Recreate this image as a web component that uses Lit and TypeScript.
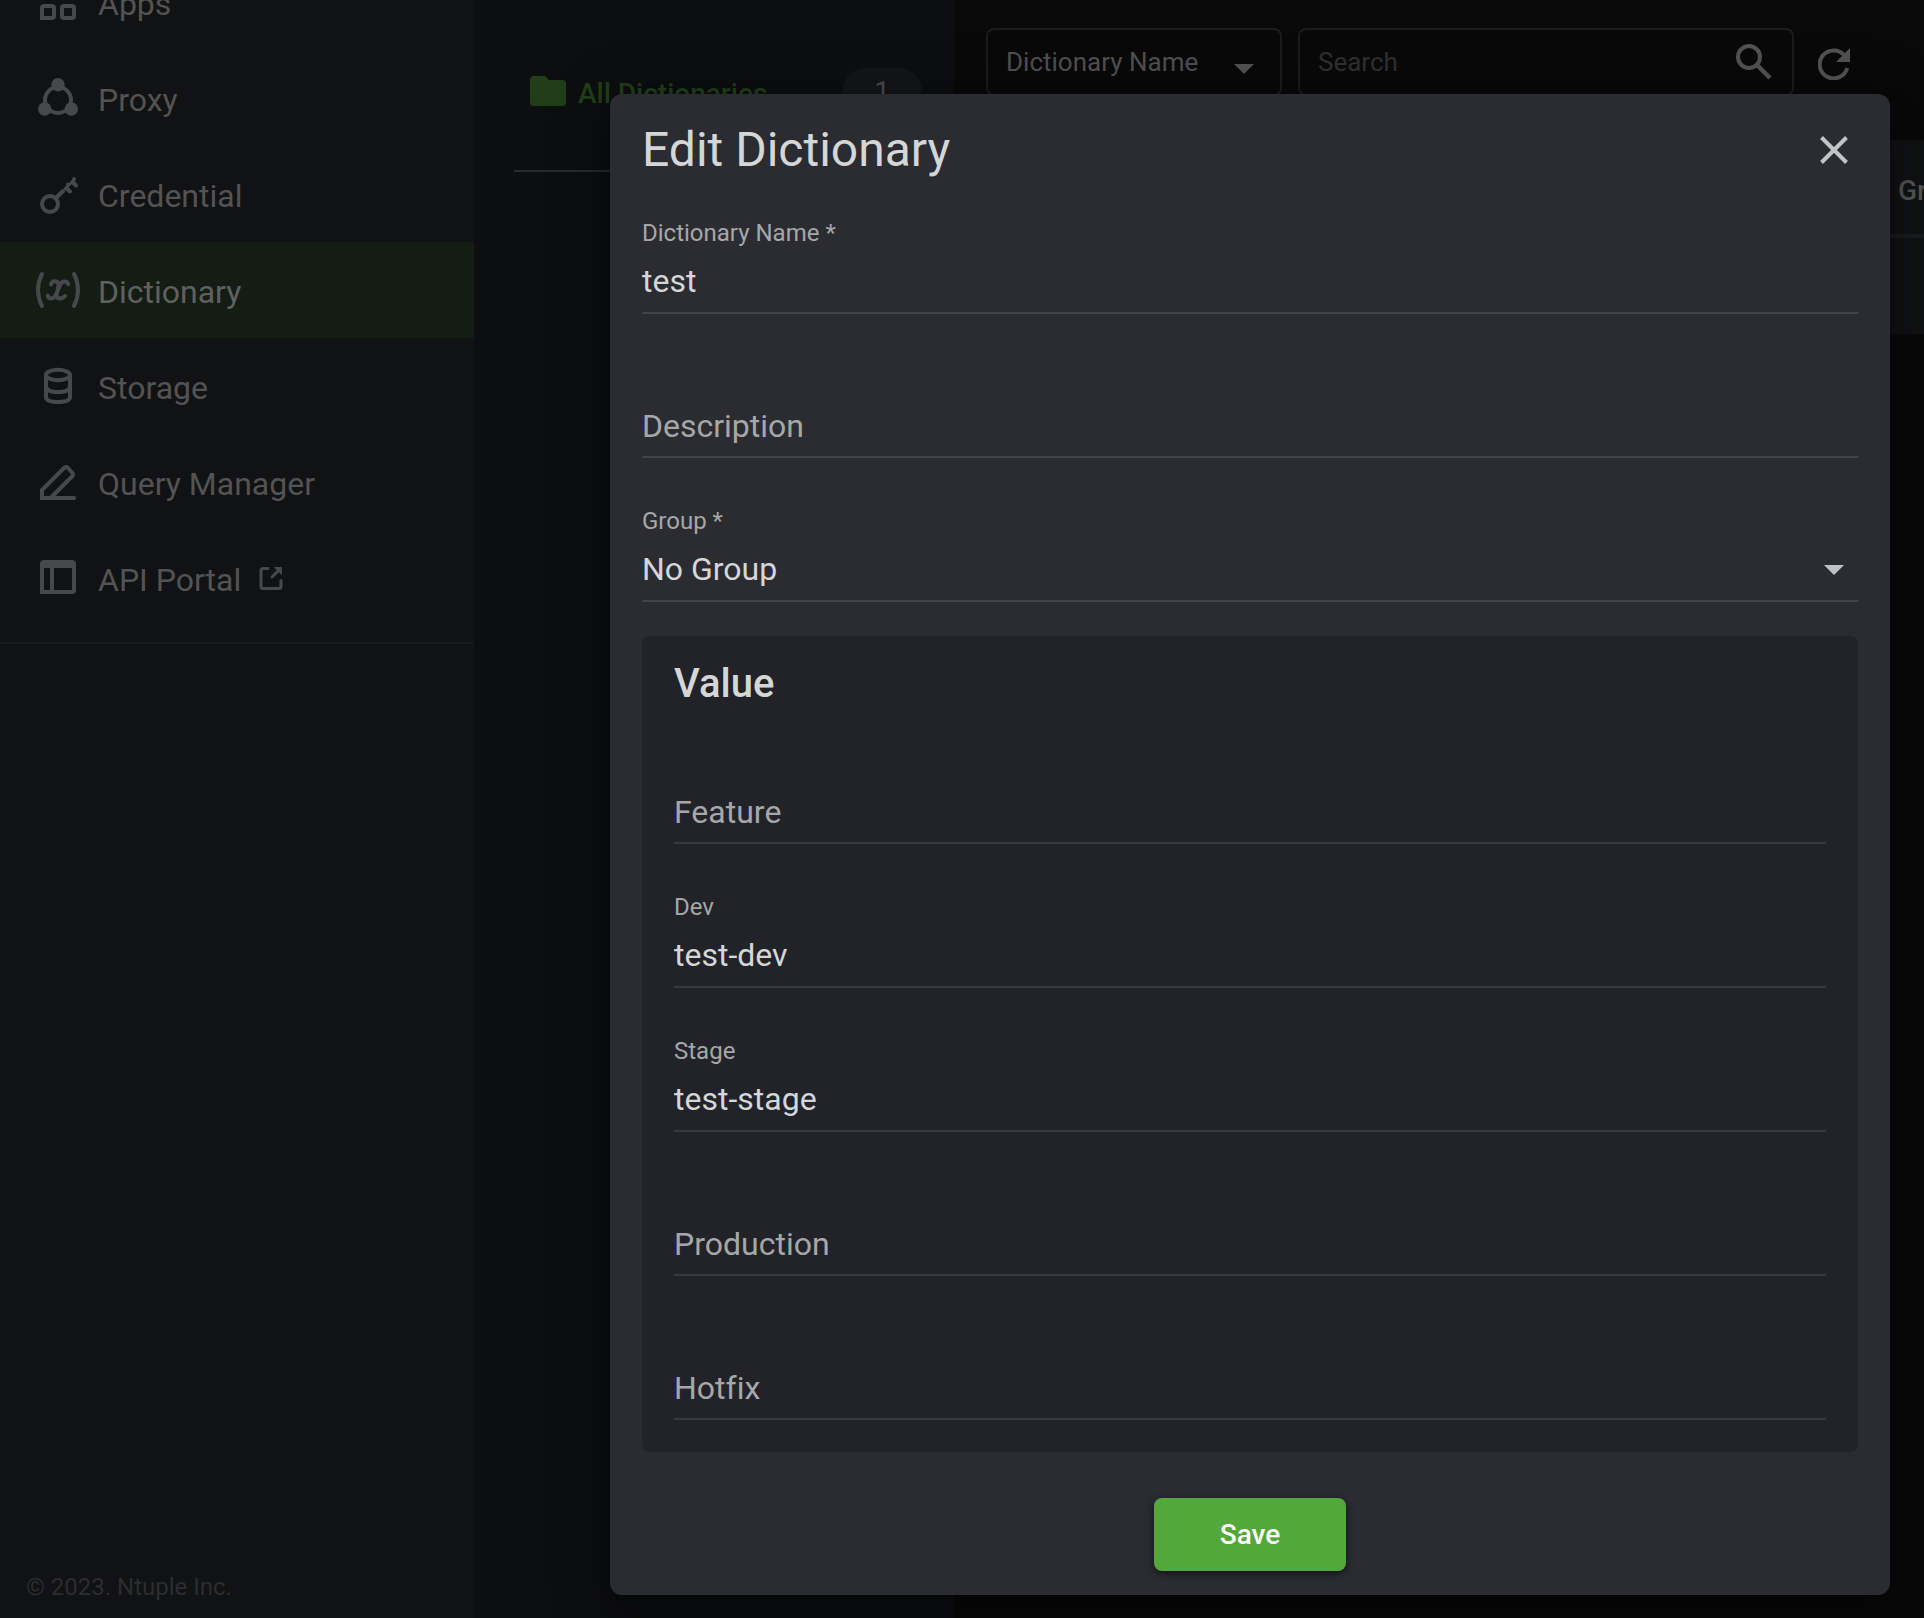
import { LitElement, html, css, svg, nothing, type SVGTemplateResult } from "lit";
import { customElement, property } from "lit/decorators.js";
import { classMap } from "lit/directives/class-map.js";

const icons: Record<string, SVGTemplateResult> = {
  apps: svg`<g fill="none" stroke="currentColor" stroke-width="4">
    <rect x="4" y="4" width="12" height="12" rx="2"/><rect x="24" y="4" width="12" height="12" rx="2"/>
    <path d="M4 36V26Q4 24 6 24H14Q16 24 16 26V34Q16 36 14 36Z"/><rect x="24" y="24" width="12" height="12" rx="2"/></g>`,
  proxy: svg`<circle cx="20" cy="22" r="13" fill="none" stroke="currentColor" stroke-width="4"/>
    <g fill="currentColor"><circle cx="20" cy="6.7" r="6.7"/><circle cx="6.7" cy="31" r="6.7"/><circle cx="33.3" cy="31" r="6.7"/></g>`,
  credential: svg`<g fill="none" stroke="currentColor" stroke-linecap="round">
    <circle cx="12" cy="30" r="8" stroke-width="4"/>
    <path d="M18.5 23.5L26 16" stroke-width="4" stroke-linecap="butt"/>
    <path d="M27 15L36 6" stroke-width="2.6"/>
    <path d="M28.5 14L32 17.5M34.5 8L38 11.5M36 5V5.1M30 10.5V10.6" stroke-width="4"/></g>`,
  dictionary: svg`<g fill="none" stroke="currentColor" stroke-width="4" stroke-linecap="round">
    <path d="M4 4Q-4 20 4 36M36 4Q44 20 36 36"/>
    <path d="M13 14.5C14 10 20.5 10 20.5 15C20.5 19 18.5 22 18.5 25.5C19 29.5 24.5 29 27 26M30.3 14.3C29 10 24 11 22.5 14C20.5 18 19 24 16.5 27C14 29.5 10 28.5 9.8 25.5"/></g>`,
  storage: svg`<g fill="none" stroke="currentColor" stroke-width="4">
    <ellipse cx="20" cy="9" rx="12" ry="5.2"/><path d="M8 9V31Q8 36 20 36T32 31V9M8 20Q8 26 20 26T32 20"/></g>`,
  query: svg`<path d="M4 36V28L26 6Q28 4 30 6L34 10.5Q36 12.5 34 14.5L12.5 36M4 36H36" fill="none" stroke="currentColor" stroke-width="4" stroke-linecap="round"/><path d="M2 34H6V38H2Z" fill="currentColor"/>`,
  portal: svg`<path fill="currentColor" fill-rule="evenodd" d="M6 2H34a4 4 0 0 1 4 4V32a4 4 0 0 1-4 4H2V6a4 4 0 0 1 4-4ZM6 10V32H12V10ZM16 10V32H34V10Z"/>`,
};

interface NavEntry { icon: string; label: string; active?: boolean; external?: boolean }

const navEntries: NavEntry[] = [
  { icon: "apps", label: "Apps" },
  { icon: "proxy", label: "Proxy" },
  { icon: "credential", label: "Credential" },
  { icon: "dictionary", label: "Dictionary", active: true },
  { icon: "storage", label: "Storage" },
  { icon: "query", label: "Query Manager" },
  { icon: "portal", label: "API Portal", external: true },
];

const caret = html`<svg class="caret" viewBox="0 0 20 10" aria-hidden="true"><path d="M0 0H20L10 10Z" fill="currentColor"/></svg>`;

/* Underlined field whose label floats above a value and rests on the line when empty. */
@customElement("form-field")
export class FormField extends LitElement {
  @property() label = "";
  @property() value = "";
  @property({ type: Array }) options?: string[];

  static styles = css`
    :host { display: block; }
    .field {
      display: grid;
      grid-template-rows: 30px 64px;
      border-bottom: 2px solid var(--line);
      color: #d5d6d8;
    }
    .label { grid-area: 1 / 1; font-size: 24px; line-height: 30px; color: #a6a7a9; }
    .empty .label { grid-area: 2 / 1; z-index: 1; padding-top: 2px; font-size: 32px; line-height: 62px; pointer-events: none; }
    .empty .label { padding-top: 4px; line-height: 60px; }
    .control {
      grid-area: 2 / 1;
      box-sizing: border-box;
      width: 100%;
      min-width: 0;
      height: 64px;
      margin: 0;
      padding: 2px 0 0;
      border: 0;
      border-radius: 0;
      outline: 0;
      background: transparent;
      color: inherit;
      font: 400 32px Roboto, sans-serif;
      appearance: none;
    }
    .control option { background: #2b2c31; }
    .caret {
      grid-area: 2 / 1;
      place-self: center end;
      width: 20px;
      height: 10px;
      margin: 0 14px 16px 0;
      padding-top: 20px;
      color: #c1c2c4;
      pointer-events: none;
    }
  `;

  render() {
    return html`<div class=${classMap({ field: true, empty: !this.value })}>
      <label class="label" for="control">${this.label}</label>
      ${this.options
        ? html`<select class="control" id="control">${this.options.map((o) => html`<option ?selected=${o === this.value}>${o}</option>`)}</select>${caret}`
        : html`<input class="control" id="control" type="text" .value=${this.value} />`}
    </div>`;
  }
}

@customElement("app-root")
export class AppRoot extends LitElement {
  static styles = css`
    :host { display: block; font-family: Roboto, sans-serif; font-variant-ligatures: none; background: #09090a; }
    .stack { display: grid; grid-template-columns: minmax(0, 1fr); min-height: 100vh; overflow: hidden; }
    .page, .overlay { grid-area: 1 / 1; }
    .page { display: flex; min-width: 0; }

    .sidebar { flex: 0 0 474px; display: flex; flex-direction: column; background: #111214; }
    .nav { margin-top: -46px; padding-bottom: 16px; border-bottom: 2px solid #18191b; }
    .item {
      display: flex;
      align-items: center;
      gap: 20px;
      height: 96px;
      padding-left: 38px;
      color: #535353;
      font-size: 32px;
      text-decoration: none;
    }
    .item.active { background: #141d13; color: #606060; }
    .item .text { padding-top: 4px; }
    .icon { flex: none; width: 40px; height: 40px; overflow: visible; color: #47484b; }
    .external { flex: none; width: 24px; height: 24px; margin-left: -2px; color: #47484b; }
    .copyright { margin: auto 0 0; padding: 0 26px 17px; font-size: 24px; line-height: 28px; color: #2c2d2e; }

    .folders { flex: 0 0 480px; background: #0d0e10; }
    .all {
      display: flex;
      align-items: center;
      gap: 12px;
      margin: 0 32px 0 40px;
      padding: 68px 0 54px 16px;
      border-bottom: 2px solid #292a2b;
      color: #203f18;
      font-size: 28px;
      font-weight: 500;
    }
    .all .name { flex: 1; padding-top: 2px; }
    .folder { width: 36px; height: 30px; padding-bottom: 2px; }
    .count {
      width: 80px;
      line-height: 48px;
      border-radius: 24px;
      background: #141518;
      color: #4a4a4b;
      font-weight: 400;
      text-align: center;
    }

    .main { flex: 1; min-width: 0; padding: 28px 0 0 32px; }
    .toolbar { display: flex; align-items: center; gap: 16px; padding-right: 74px; color: #525252; }
    .box {
      box-sizing: border-box;
      display: grid;
      align-items: center;
      height: 68px;
      border: 2px solid #1c1c1e;
      border-radius: 8px;
    }
    .pick { flex: 0 0 296px; }
    .search { flex: 1; min-width: 0; }
    .box select, .box input {
      grid-area: 1 / 1;
      box-sizing: border-box;
      width: 100%;
      min-width: 0;
      height: 64px;
      margin: 0;
      padding: 0 18px;
      border: 0;
      outline: 0;
      background: transparent;
      color: #505050;
      font: 400 26px Roboto, sans-serif;
      appearance: none;
    }
    .box input::placeholder { color: #303031; opacity: 1; }
    .caret { grid-area: 1 / 1; justify-self: end; width: 20px; height: 10px; margin-right: 26px; padding-top: 14px; pointer-events: none; }
    .plain { display: grid; place-items: center; padding: 0; border: 0; background: transparent; color: inherit; cursor: pointer; }
    .find { grid-area: 1 / 1; justify-self: end; margin-right: 20px; }
    .find svg { width: 36px; height: 36px; }
    .refresh { margin-left: 8px; }
    .refresh svg { width: 32px; height: 32px; padding-top: 4px; }

    .list { width: 100%; margin-top: 44px; border-collapse: separate; border-spacing: 0; table-layout: fixed; background: #111213; }
    .list th {
      box-sizing: border-box;
      height: 98px;
      padding: 6px 0 0;
      border-bottom: 4px solid #1b1c1d;
      color: #555;
      font-size: 28px;
      font-weight: 500;
      text-align: left;
    }
    .list td { height: 96px; padding: 0; }
    .list .group { width: 26px; overflow: hidden; white-space: nowrap; }

    .overlay { z-index: 1; padding: 94px 34px 20px 610px; }
    .dialog {
      display: flex;
      flex-direction: column;
      padding: 28px 32px 24px;
      border-radius: 12px;
      background: #2b2c31;
      color: #d5d6d8;
      box-shadow: 0 22px 30px 4px rgba(0, 0, 0, 0.25), 0 8px 60px 10px rgba(0, 0, 0, 0.2);
      --line: #424348;
    }
    .head { display: flex; align-items: center; justify-content: space-between; margin-bottom: 40px; }
    .title { margin: 0; font-size: 48px; font-weight: 400; line-height: 56px; }
    .close { width: 48px; height: 56px; color: #c3c4c6; }
    .close svg { width: 28px; height: 28px; }
    .fields { display: grid; gap: 48px; }
    .card { margin-top: 34px; padding: 24px 32px 32px; border-radius: 8px; background: #222328; --line: #39393d; }
    .subtitle { margin: 0 0 40px; font-size: 40px; font-weight: 500; line-height: 48px; }
    .save {
      align-self: center;
      width: 192px;
      margin-top: 46px;
      padding: 20px 0;
      border: 0;
      border-radius: 8px;
      background: #52a83b;
      color: #fff;
      font: 500 28px/33px Roboto, sans-serif;
      box-shadow: 0 3px 6px rgba(0, 0, 0, 0.4), 0 2px 10px rgba(0, 0, 0, 0.2);
      cursor: pointer;
    }
  `;

  private renderNav() {
    return navEntries.map((entry) => html`<a class=${classMap({ item: true, active: !!entry.active })} href="#">
      <svg class="icon" viewBox="0 0 40 40" aria-hidden="true">${icons[entry.icon]}</svg>
      <span class="text">${entry.label}</span>
      ${entry.external
        ? html`<svg class="external" viewBox="0 0 24 24" fill="none" stroke="currentColor" stroke-width="3" stroke-linecap="round" aria-hidden="true"><path d="M9 2.5H4Q2 2.5 2 4.5V20.5Q2 22.5 4 22.5H20Q22 22.5 22 20.5V14.5M13 11L20 4"/><path d="M16 1.5H22.5V8Z" fill="currentColor" stroke-width="1"/></svg>`
        : nothing}
    </a>`);
  }

  render() {
    return html`<div class="stack">
      <div class="page">
        <aside class="sidebar">
          <nav class="nav">${this.renderNav()}</nav>
          <p class="copyright">© 2023. Ntuple Inc.</p>
        </aside>
        <section class="folders">
          <div class="all">
            <svg class="folder" viewBox="0 0 36 30" aria-hidden="true"><path fill="currentColor" d="M4 0H14Q15.5 0 16.5 1.2L18.5 4H32.5Q36 4 36 7.5V26.5Q36 30 32.5 30H3.5Q0 30 0 26.5V4Q0 0 4 0Z"/></svg>
            <span class="name">All Dictionaries</span>
            <span class="count">1</span>
          </div>
        </section>
        <main class="main">
          <div class="toolbar">
            <div class="box pick"><select aria-label="Search by"><option>Dictionary Name</option></select>${caret}</div>
            <div class="box search">
              <input type="text" placeholder="Search" aria-label="Search" />
              <button class="plain find" aria-label="Search">
                <svg viewBox="0 0 36 36" fill="none" stroke="currentColor" stroke-width="4"><circle cx="13" cy="13" r="11"/><path d="M21.5 21.5L34 34" stroke-width="4.5"/></svg>
              </button>
            </div>
            <button class="plain refresh" aria-label="Refresh">
              <svg viewBox="0 0 32 32"><path d="M26.5 7.5A14 14 0 1 0 29.2 20" fill="none" stroke="currentColor" stroke-width="4"/><path d="M32 0V14H18Z" fill="currentColor"/></svg>
            </button>
          </div>
          <table class="list">
            <thead><tr><th></th><th class="group">Group</th></tr></thead>
            <tbody><tr><td></td><td></td></tr></tbody>
          </table>
        </main>
      </div>
      <div class="overlay">
        <form class="dialog" role="dialog" aria-labelledby="title" @submit=${(e: Event) => e.preventDefault()}>
          <div class="head">
            <h1 class="title" id="title">Edit Dictionary</h1>
            <button class="plain close" type="button" aria-label="Close">
              <svg viewBox="0 0 28 28"><path d="M1.5 1.5L26.5 26.5M26.5 1.5L1.5 26.5" stroke="currentColor" stroke-width="4"/></svg>
            </button>
          </div>
          <div class="fields">
            <form-field label="Dictionary Name *" value="test"></form-field>
            <form-field label="Description"></form-field>
            <form-field label="Group *" value="No Group" .options=${["No Group"]}></form-field>
          </div>
          <section class="card">
            <h2 class="subtitle">Value</h2>
            <div class="fields">
              <form-field label="Feature"></form-field>
              <form-field label="Dev" value="test-dev"></form-field>
              <form-field label="Stage" value="test-stage"></form-field>
              <form-field label="Production"></form-field>
              <form-field label="Hotfix"></form-field>
            </div>
          </section>
          <button class="save" type="submit">Save</button>
        </form>
      </div>
    </div>`;
  }
}
